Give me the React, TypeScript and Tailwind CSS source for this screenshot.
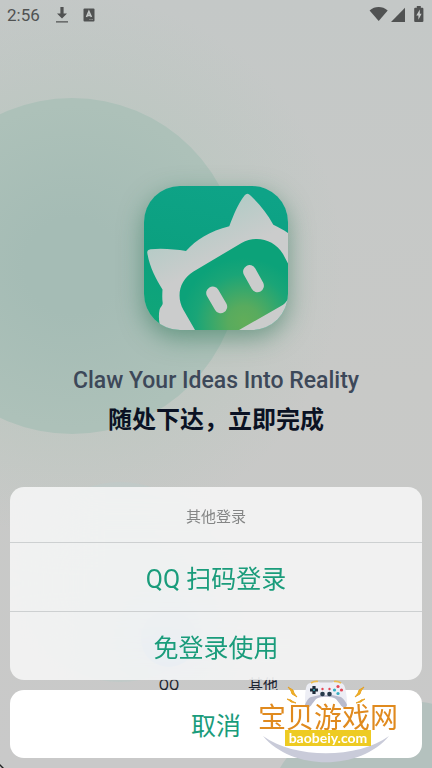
import React from "react";

const FONT = "font-[Roboto,'Noto_Sans_CJK_SC',sans-serif]";

function StatusBar() {
  return (
    <header className="flex h-[30px] items-center justify-between pl-[7px] pr-2 text-[#505252]">
      <div className="flex items-center">
        <span className="text-[17px] leading-5">2:56</span>
        <svg className="ml-[15px]" width="14" height="18" viewBox="0 0 14 18" fill="currentColor" aria-hidden="true">
          <path d="M5.400 1h3.200v6.500H12L7 12.400 2 7.500h3.400zM1 15.200h12v1.400H1z" />
        </svg>
        <svg className="ml-[14px]" width="12" height="14" viewBox="0 0 12 14" aria-hidden="true">
          <rect x="0.500" y="0.500" width="11" height="13" rx="1" fill="currentColor" />
          <path d="M3.500 9 5.900 3.500 8.400 9M4.200 7.400h3.500" stroke="#c5c9c8" strokeWidth="1.600" fill="none" />
          <path d="M6.500 11.500h1M8.500 11.500h1.200" stroke="#9fa2a1" />
        </svg>
      </div>
      <svg width="55" height="18" viewBox="0 0 55 18" fill="currentColor" aria-hidden="true">
        <path d="M.6 4.400C5.800-.1 13.400-.1 18.700 4.400L9.700 15z" />
        <path d="M36 1.800V16H22z" />
        <path d="M47.800 0h4v1.800h1.700c.5 0 .9.4.9.9v12.400c0 .5-.4.9-.9.9h-7.400a.9.9 0 0 1-.9-.9V2.700c0-.5.4-.9.9-.9h1.700z" />
        <path d="M50.800 3.500 47.300 9.600h2.100v4.200l3.200-6h-1.800z" fill="#c8cbca" />
      </svg>
    </header>
  );
}

function AppLogo() {
  return (
    <svg
      className="size-36 rounded-[36px] shadow-[0_8px_24px_rgba(30,110,75,0.5)]"
      viewBox="0 0 144 144"
      role="img"
      aria-label="Claw"
    >
      <defs>
        <linearGradient id="logoBack" x1="0.5" y1="0" x2="0.3" y2="1">
          <stop offset="0" stopColor="#0ea387" />
          <stop offset="0.5" stopColor="#0ba07f" />
          <stop offset="1" stopColor="#10a678" />
        </linearGradient>
        <linearGradient id="logoHead" gradientUnits="userSpaceOnUse" x1="52" y1="26" x2="76" y2="74">
          <stop offset="0" stopColor="#b0cbc5" />
          <stop offset="1" stopColor="#cbcccc" />
        </linearGradient>
        <radialGradient id="logoGlow" gradientUnits="userSpaceOnUse" cx="100" cy="136" r="64">
          <stop offset="0" stopColor="#62ad59" />
          <stop offset="0.25" stopColor="#58ab5e" />
          <stop offset="0.75" stopColor="#1aa577" />
          <stop offset="1" stopColor="#0ca279" />
        </radialGradient>
      </defs>
      <rect width="144" height="144" fill="url(#logoBack)" />
      <path
        d="M3.300 67Q2.800 64 6.500 63.300C18 62 31 63.300 42 65C52 54 66 44.800 85.300 40.300C89.500 29 94 18 100.500 9.500Q103.300 6 106.500 9.500C115.500 18 123 27 129.300 38.700C134 41 139 43.500 144 47V144H17.500C14.500 137 14.500 129 15.500 124C16.500 120.500 18.700 119.500 18.700 117C18 112 18.300 108 18.500 103.500C12 93 5.500 81 3.300 67Z"
        fill="url(#logoHead)"
      />
      <path
        d="M51 144 39.500 124C31.500 110 36 93.500 49.500 85.500L97.500 57C112 49 130 53 139 68L144 77.500V113C142 116.500 140 118.300 137 120L95 144Z"
        fill="url(#logoGlow)"
      />
      <path d="M68.700 107 76.700 120.700M105.600 85.600 113.400 99.700" stroke="#cbcccc" strokeWidth="13" strokeLinecap="round" />
    </svg>
  );
}

function Backdrop() {
  return (
    <div className="absolute inset-0 overflow-hidden" aria-hidden="true">
      <div className="absolute -left-[228px] -top-[34px] size-[600px] rounded-full bg-[radial-gradient(circle,rgba(165,195,178,0.3)_30%,rgba(185,200,193,0)_64%)]" />
      <div className="absolute -left-24 top-[98px] size-[336px] rounded-full bg-[radial-gradient(circle,#a5bcb5_20%,#adc1b9_68%)]" />
      <div className="absolute left-5 top-[482px] size-[200px] rounded-full bg-[#c1cac8]" />
      <div className="absolute -bottom-[212px] left-[260px] size-[280px] rounded-full bg-[#b4c1be]" />
      <svg className="absolute bottom-0 left-0" width="4" height="4" viewBox="0 0 4 4">
        <path d="M0 0 4 4H2L0 2z" fill="#222" />
      </svg>
    </div>
  );
}

function LoginOption({ label, tint }: { label: string; tint: string }) {
  return (
    <button type="button" className="flex w-16 flex-col items-center gap-2">
      <span className={`size-14 rounded-full ${tint}`} />
      <span className="text-[15px] leading-5 text-[#1c2430]">{label}</span>
    </button>
  );
}

function Watermark() {
  return (
    <div className="pointer-events-none absolute bottom-0 right-8 flex h-[93px] w-36 flex-col items-center pt-8">
      <svg className="absolute inset-0" width="144" height="93" viewBox="0 0 144 93" aria-hidden="true">
        <path d="M7 61C38 84 102 84 133 61C104 96 36 96 7 61Z" fill="#c9cbd9" />
        <g fill="#f0b323" stroke="#e59b18" strokeWidth="0.8">
          <path d="m32 12 5 3 1 3 3 4-5-3-1-3zM31 24l4 1 1 1 4 2-5-1-1-1z" />
          <path d="m108 12-5 3-1 3-3 4 5-3 1-3zM109 24l-4 1-1 1-4 2 5-1 1-1z" />
        </g>
        <path
          d="M51 10C54 7 60 6.500 64 7.500H76C80 6.500 85 7 88 10C90 14 91 23 91 29C90 34 86 33 84 29L80 24C76 21 64 21 60 24L56 29C54 33 50 34 49 30C49 23 49 14 51 10Z"
          fill="#edeef5"
        />
        <path d="M49 30C50 27 52 23 55 22L64 20H76L85 22C88 24 90 27 91 30C90 34 86 33 84 29L80 24C76 21 64 21 60 24L56 29C54 33 50 34 49 30Z" fill="#b9bbcd" />
        <path d="M55 8Q58 6 62 6.500M85 8Q82 6 78 6.500" stroke="#edbd4e" strokeWidth="1.600" fill="none" />
        <path d="M58 11v8M54 15h8" stroke="#1e2c3a" strokeWidth="3.200" />
        <circle cx="58" cy="15" r="1" fill="#39acb8" />
        <g fill="#25394a">
          <circle cx="66.500" cy="19" r="2.300" />
          <circle cx="73.500" cy="19" r="2.300" />
        </g>
        <g fill="#e44755">
          <circle cx="66.500" cy="14" r="1.200" />
          <circle cx="73.500" cy="14" r="1.200" />
          <circle cx="82" cy="11.500" r="1.600" />
          <circle cx="85.500" cy="15" r="1.600" />
        </g>
        <g fill="#35adc2">
          <circle cx="78.500" cy="15" r="1.600" />
          <circle cx="82" cy="18.500" r="1.600" />
        </g>
      </svg>
      <span className="relative whitespace-nowrap text-[28px] leading-[23px] text-[#e08a1e]">宝贝游戏网</span>
      <span className="relative flex h-4 w-[86px] items-center justify-center bg-[#eecb22] font-[Lato,sans-serif] text-sm font-bold leading-4 text-white">
        baobeiy.com
      </span>
    </div>
  );
}

export default function App() {
  const row = "flex w-full items-center justify-center pt-[5px] text-[25px] leading-8 text-[#1a9c7b]";
  return (
    <div className={`relative flex min-h-screen flex-col bg-linear-to-b from-[#c4c8c7] via-[#c8c9c7] to-[#c9c9c9] ${FONT}`}>
      <Backdrop />
      <div className="relative flex flex-1 flex-col">
        <StatusBar />
        <main className="flex flex-1 flex-col items-center pt-[156px]">
          <AppLogo />
          <p className="mt-9 text-[23px] font-medium leading-[30px] text-[#3d4859]">Claw Your Ideas Into Reality</p>
          <h1 className="mt-[6px] text-2xl font-bold leading-9 text-[#0b1224]">随处下达，立即完成</h1>
          <div className="mt-auto flex gap-[30px] pb-[73px]">
            <LoginOption label="QQ" tint="bg-[#8fb0da]" />
            <LoginOption label="其他" tint="bg-[#cccccc]" />
          </div>
        </main>
      </div>

      <div role="dialog" aria-label="其他登录" className="absolute inset-x-0 bottom-0 flex flex-col gap-[10px] p-[10px]">
        <div className="overflow-hidden rounded-[14px] bg-[#fcfcfc]/78 backdrop-blur-2xl">
          <h2 className="flex h-[55px] items-center justify-center pt-1 text-[15px] leading-5 text-[#858686]">其他登录</h2>
          <button type="button" className={`${row} h-[69px] border-t border-[#cdd0d1]`}>QQ 扫码登录</button>
          <button type="button" className={`${row} h-[69px] border-t border-[#cdd0d1]`}>免登录使用</button>
        </div>
        <button type="button" className={`${row} h-[68px] rounded-[14px] bg-white`}>取消</button>
        <Watermark />
      </div>
    </div>
  );
}
